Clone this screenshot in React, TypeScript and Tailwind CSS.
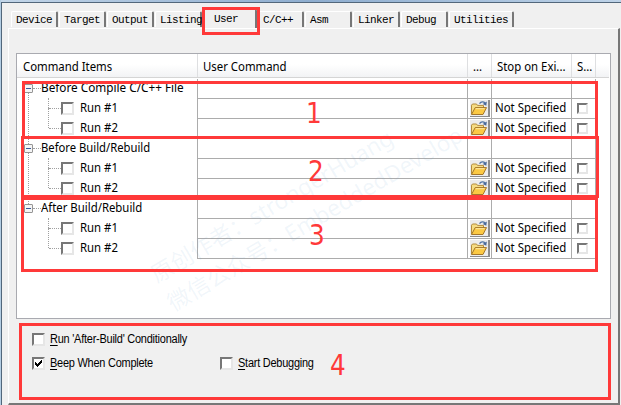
import React from "react";

const UI = "font-['Noto_Sans','Open_Sans',sans-serif]";

const tabs = [
  { label: "Device", width: "w-[47px]" },
  { label: "Target", width: "w-[47px]" },
  { label: "Output", width: "w-[47px]" },
  { label: "Listing", width: "w-[47px]" },
  { label: "User", width: "w-[54px]", active: true },
  { label: "C/C++", width: "w-[46px]" },
  { label: "Asm", width: "w-[47px]" },
  { label: "Linker", width: "w-[47px]" },
  { label: "Debug", width: "w-[47px]" },
  { label: "Utilities", width: "w-[65px]" },
];

const groups = [
  { label: "Before Compile C/C++ File", fit: "scale-x-[0.94]" },
  { label: "Before Build/Rebuild", fit: "scale-x-[0.9]" },
  { label: "After Build/Rebuild", fit: "scale-x-[0.91]" },
];
const commands = ["Run #1", "Run #2"];

function Tab({ label, width, active }: { label: string; width: string; active?: boolean }) {
  return (
    <div
      className={`${width} ${active ? "h-[19px] pl-[10px]" : "mb-px h-4 pt-[2px] pl-1"} flex items-center rounded-t-[2px] border-t border-r-2 border-l border-t-white border-r-[#777] border-l-white font-['Liberation_Mono',monospace] text-[11px] tracking-[-0.6px] whitespace-pre text-black`}
    >
      {label}
    </div>
  );
}

function CheckBox({ checked, className = "size-[13px]" }: { checked?: boolean; className?: string }) {
  return (
    <span
      className={`${className} flex shrink-0 items-center justify-center border-2 border-t-[#777] border-r-[#e6e6e6] border-b-[#e6e6e6] border-l-[#777] bg-white`}
    >
      {checked && (
        <svg viewBox="0 0 9 9" className="size-[9px] shrink-0" shapeRendering="crispEdges">
          <path d="M1 3h1v1h1v1h1v-1h1v-1h1v-1h1v-1h1v3h-1v1h-1v1h-1v1h-1v1h-1v-1h-1v-1h-1z" fill="#000" />
        </svg>
      )}
    </span>
  );
}

function FolderButton() {
  return (
    <span className="flex h-[17px] w-5 items-center justify-center border-r-2 border-b border-[#8c8c8c] bg-[#ececec]">
      <svg viewBox="0 0 18 16" className="h-4 w-[18px]">
        <path d="M1.5 14V5.2l1-1.2h4l1 1.4h6V8" fill="#f5dc83" stroke="#b38a3a" />
        <path d="M1.5 14.5 5.2 7.6h11.3L13 14.5z" fill="#fbc944" stroke="#a4762a" />
        <path d="M5.7 8.7h8.8" stroke="#ffeaa5" />
        <path d="M9.5 3.6C11 1.4 13.5 1.2 15 3" fill="none" stroke="#5376a5" strokeWidth="1.3" />
        <path d="m16.8 1.5-.5 4.2-3.6-1.6z" fill="#48699b" />
      </svg>
    </span>
  );
}

function HeaderCell({ label, width, pad }: { label: string; width: string; pad: string }) {
  return (
    <div className={`${width} ${pad} flex h-full items-center border-r border-[#dedfe1] pt-[3px]`}>
      <span className="origin-left scale-x-[0.91] whitespace-nowrap">{label}</span>
    </div>
  );
}

function GridCells({ filled }: { filled?: boolean }) {
  return (
    <>
      <div className="w-[271px] border-x border-b border-[#acacac]" />
      <div className="flex w-6 items-center justify-end border-r border-b border-[#acacac] pr-px">
        {filled && <FolderButton />}
      </div>
      <div className="flex w-20 items-center border-r border-b border-[#acacac] pb-[2px] pl-[3px]">
        {filled && <span className="origin-left scale-x-[0.915] whitespace-nowrap">Not Specified</span>}
      </div>
      <div className="flex w-6 items-center border-r border-b border-[#acacac] pl-[5px]">
        {filled && <CheckBox className="size-[11px]" />}
      </div>
    </>
  );
}

function Group({ label, fit, last }: { label: string; fit: string; last: boolean }) {
  return (
    <>
      <div className="flex h-5">
        <div className="flex w-[180px] items-center pb-[2px] pl-[7px]">
          <span className="relative flex size-[9px] items-center justify-center rounded-[1px] border border-[#959595] bg-[#f5f5f5]">
            <i className="h-px w-[5px] bg-[#3b5a9a]" />
            {!last && <i className="absolute top-[8px] left-[3px] h-[51px] border-l border-dotted border-[#a0a0a0]" />}
          </span>
          <i className="w-2 border-t border-dotted border-[#a0a0a0]" />
          <span className={`origin-left whitespace-nowrap ${fit}`}>{label}</span>
        </div>
        <GridCells />
      </div>
      {commands.map((name, index) => (
        <div key={name} className="flex h-5">
          <div className="flex w-[180px] items-center pb-[2px] pl-[31px]">
            <i
              className={`${index === 0 ? "h-[10px]" : "h-5"} -mt-[11px] self-start border-l border-dotted border-[#a0a0a0] ${index === 0 ? "translate-y-[10px]" : ""}`}
            />
            <i className="w-3 border-t border-dotted border-[#a0a0a0]" />
            <CheckBox />
            <span className="ml-[6px] origin-left scale-x-[0.91] whitespace-nowrap">{name}</span>
          </div>
          <GridCells filled />
        </div>
      ))}
    </>
  );
}

function Option({ letter, rest, checked }: { letter: string; rest: string; checked?: boolean }) {
  return (
    <label className="flex h-4 items-center gap-[5px] font-['Liberation_Sans',sans-serif] text-[12px] tracking-[-0.25px] text-black">
      <CheckBox checked={checked} />
      <span className="origin-left scale-x-[0.912] whitespace-nowrap">
        <span className="underline underline-offset-2">{letter}</span>
        {rest}
      </span>
    </label>
  );
}

function Mark({ className, children }: { className: string; children: string }) {
  return (
    <span
      className={`${className} absolute font-['DejaVu_Sans_Condensed','DejaVu_Sans',sans-serif] text-[27.5px] leading-7 text-[#ff3939]`}
    >
      {children}
    </span>
  );
}

export default function App() {
  return (
    <div className="relative flex h-[405px] w-[621px] flex-col overflow-hidden border-l border-[#b3cde3] bg-[#f0f0f0]">
      <div className="h-[2px] shrink-0 bg-linear-to-r from-[#c2d5e8] via-[#8eadcf] to-[#bed3e8]" />
      <div className="flex min-h-0 flex-1 flex-col border-t border-l border-[#52677b] pt-[7px] pl-[6px]">
        <div className="flex h-[18px] shrink-0 items-end gap-px pl-[3px]">
          {tabs.map((tab) => (
            <Tab key={tab.label} {...tab} />
          ))}
        </div>
        <div className="flex h-[377px] w-[612px] shrink-0 flex-col border-t border-r-2 border-b-2 border-l border-t-white border-r-[#777] border-b-[#777] border-l-white pt-6 pl-[7px]">
          <div className={`${UI} h-[266px] w-[595px] shrink-0 border border-[#a9aab0] bg-white text-[12.5px] leading-4 text-black`}>
            <div className="mr-px flex h-6 items-center border-b border-[#d5d5d5] bg-linear-to-b from-white from-45% to-[#f2f3f5]">
              <HeaderCell label="Command Items" width="w-[181px]" pad="pl-[6px]" />
              <HeaderCell label="User Command" width="w-[270px]" pad="pl-[5px]" />
              <HeaderCell label="..." width="w-6" pad="pl-[5px]" />
              <HeaderCell label="Stop on Exi..." width="w-20" pad="pl-[5px]" />
              <HeaderCell label="S..." width="w-6" pad="pl-[5px]" />
            </div>
            <div className="pt-px">
              {groups.map((group, index) => (
                <Group key={group.label} {...group} last={index === groups.length - 1} />
              ))}
            </div>
          </div>
          <div className="flex flex-col gap-2 pt-3 pl-4">
            <Option letter="R" rest="un 'After-Build' Conditionally" />
            <div className="flex">
              <div className="w-[188px]">
                <Option letter="B" rest="eep When Complete" checked />
              </div>
              <Option letter="S" rest="tart Debugging" />
            </div>
          </div>
        </div>
      </div>

      <div className="pointer-events-none absolute top-[262px] left-[143px] origin-top-left -rotate-[30.6deg] font-['Noto_Sans','Noto_Sans_CJK_SC',sans-serif] text-[22.7px] leading-[33px] whitespace-nowrap text-[#6f9fd4]/10">
        <div>原创作者：strongerHuang</div>
        <div>微信公众号：EmbeddedDevelop</div>
      </div>

      <div className="absolute top-[7px] left-[201px] h-7 w-[58px] border-3 border-[#ff3939]" />
      <div className="absolute top-[81px] left-[21px] h-[58px] w-[576px] border-3 border-[#ff3939]" />
      <div className="absolute top-[136px] left-[20px] h-[62px] w-[578px] border-3 border-[#ff3939]" />
      <div className="absolute top-[197px] left-[20px] h-[75px] w-[577px] border-3 border-[#ff3939]" />
      <div className="absolute top-[323px] left-[18px] h-[77px] w-[592px] border-3 border-[#ff3939]" />
      <Mark className="top-[99px] left-[305px]">1</Mark>
      <Mark className="top-[157px] left-[307px]">2</Mark>
      <Mark className="top-[221px] left-[308px]">3</Mark>
      <Mark className="top-[351px] left-[329px]">4</Mark>
    </div>
  );
}
